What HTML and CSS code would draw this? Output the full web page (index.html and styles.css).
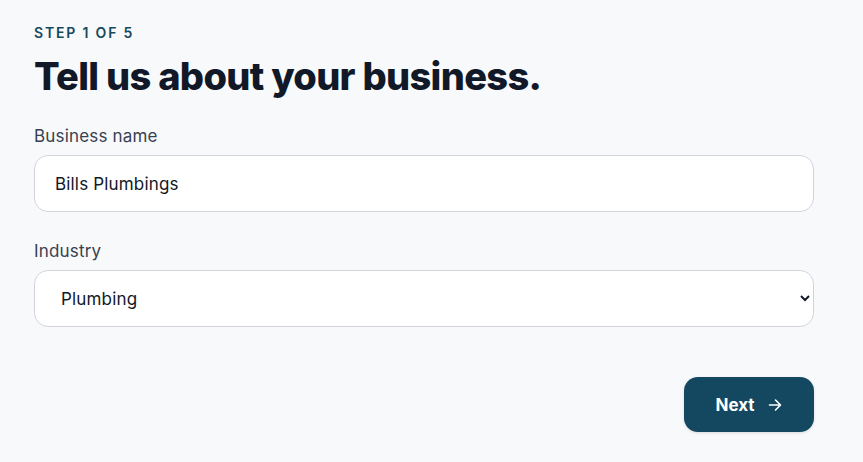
FILE: index.html
```html
<!DOCTYPE html>
<html lang="en">
<head>
<meta charset="utf-8">
<title>Step 1 of 5</title>
<link rel="stylesheet" href="styles.css">
</head>
<body>
<main class="wizard">
  <p class="step">Step 1 of 5</p>
  <h1 class="title">Tell us about your business.</h1>
  <form class="form">
    <div class="field">
      <label class="label" for="bname">Business name</label>
      <input class="control" id="bname" type="text" value="Bills Plumbings">
    </div>
    <div class="field">
      <label class="label" for="industry">Industry</label>
      <select class="control select" id="industry">
        <option selected>Plumbing</option>
        <option>Electrical</option>
        <option>Landscaping</option>
      </select>
    </div>
    <div class="actions">
      <button type="button" class="btn-next">
        <span>Next</span>
        <svg class="arrow" width="16" height="16" viewBox="0 0 16 16" fill="none" stroke="currentColor" stroke-width="1.6" stroke-linecap="round" stroke-linejoin="round"><path d="M2.5 8h11M8.5 3l5 5-5 5"/></svg>
      </button>
    </div>
  </form>
</main>
</body>
</html>
```

FILE: styles.css
```css
* { box-sizing: border-box; }
html, body { margin: 0; padding: 0; }
body {
  background: #f8f9fb;
  font-family: Inter, "Noto Sans", "Liberation Sans", sans-serif;
  color: #111827;
}
.wizard {
  width: 848px;
  padding: 23px 34px 30px 34px;
}
.step {
  margin: 0;
  font-size: 14px;
  line-height: 20px;
  font-weight: 600;
  letter-spacing: 0.13em;
  text-transform: uppercase;
  color: #164860;
}
.title {
  margin: 11px 0 0 0;
  font-size: 38px;
  line-height: 1.2;
  font-weight: 800;
  letter-spacing: -0.018em;
  color: #111827;
}
.form {
  margin-top: 24px;
  display: flex;
  flex-direction: column;
}
.field {
  display: flex;
  flex-direction: column;
  gap: 7px;
}
.field + .field { margin-top: 27px; }
.label {
  font-size: 17px;
  line-height: 24px;
  letter-spacing: 0.01em;
  color: #374151;
}
.control {
  width: 780px;
  height: 57px;
  padding: 2px 20px 0 20px;
  font-family: inherit;
  font-size: 17px;
  letter-spacing: 0.01em;
  color: #111827;
  background: #ffffff;
  border: 1px solid #d1d5db;
  border-radius: 14px;
  outline: none;
}
.select { padding-left: 22px; padding-right: 8px; }
.actions {
  width: 780px;
  margin-top: 50px;
  display: flex;
  justify-content: flex-end;
}
.btn-next {
  display: inline-flex;
  align-items: center;
  justify-content: center;
  gap: 12px;
  width: 130px;
  height: 55px;
  padding: 2px 0 0 0;
  border: 0;
  border-radius: 14px;
  background: #134860;
  color: #ffffff;
  font-family: inherit;
  font-size: 17px;
  font-weight: 700;
  box-shadow: 0 1px 3px rgba(0,0,0,0.12);
  cursor: pointer;
}
.arrow { display: block; }
```
